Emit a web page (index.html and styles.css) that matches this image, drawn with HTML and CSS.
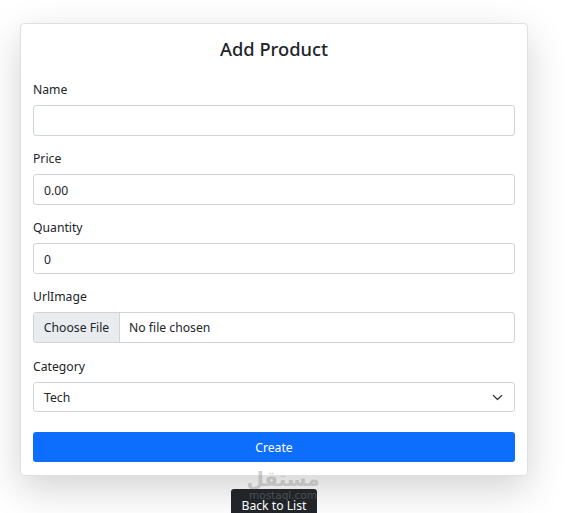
FILE: index.html
```html
<!DOCTYPE html>
<html lang="en">
<head>
    <meta charset="UTF-8">
    <meta name="viewport" content="width=device-width, initial-scale=1.0">
    <title>Add Product</title>
    <link rel="stylesheet" href="styles.css">
</head>
<body>
    <div class="page">
        <div class="card">
            <h2 class="title">Add Product</h2>
            <form class="form">
                <div class="group">
                    <label class="label">Name</label>
                    <input type="text" class="control">
                </div>
                <div class="group">
                    <label class="label">Price</label>
                    <input type="text" class="control" value="0.00">
                </div>
                <div class="group">
                    <label class="label">Quantity</label>
                    <input type="text" class="control" value="0">
                </div>
                <div class="group">
                    <label class="label">UrlImage</label>
                    <div class="control file">
                        <span class="file-btn">Choose File</span>
                        <span class="file-name">No file chosen</span>
                    </div>
                </div>
                <div class="group">
                    <label class="label">Category</label>
                    <div class="control select">
                        <span>Tech</span>
                        <svg class="chevron" viewBox="0 0 16 16" width="11" height="11">
                            <path d="M2 5l6 6 6-6" fill="none" stroke="#343a40" stroke-width="1.8" stroke-linecap="round" stroke-linejoin="round"/>
                        </svg>
                    </div>
                </div>
                <button type="button" class="create">Create</button>
            </form>
        </div>
        <a class="back">Back to List</a>
        <div class="mark">
            <div class="mark-ar">مستقل</div>
            <div class="mark-en">mostaql.com</div>
        </div>
    </div>
</body>
</html>
```

FILE: styles.css
```css
*{
    box-sizing: border-box;
    margin: 0;
    padding: 0;
}
html, body{
    height: 100%;
    overflow: hidden;
    background: #fff;
}
body{
    font-family: "Noto Sans", "Open Sans", sans-serif;
    font-size: 12.2px;
    color: #212529;
}
.page{
    position: relative;
    width: 569px;
    height: 513px;
    padding: 23px 0 0 20px;
}
.card{
    width: 508px;
    height: 453px;
    padding: 0 12px;
    background: #fff;
    border: 1px solid #dfe0e2;
    border-radius: 4px;
    box-shadow: 0 13px 38px rgba(0,0,0,.175);
}
.title{
    height: 57px;
    padding-top: 10px;
    font-size: 18.3px;
    font-weight: 500;
    line-height: 29px;
    text-align: center;
}
.group{
    margin-bottom: 14.15px;
}
.label{
    display: block;
    height: 24px;
    line-height: 18.6px;
}
.control{
    display: block;
    width: 100%;
    height: 31px;
    padding: 2px 10px 0;
    font: inherit;
    color: #212529;
    background: #fff;
    border: 1px solid #ced4da;
    border-radius: 3px;
}
.file{
    display: flex;
    align-items: center;
    padding: 0;
    overflow: hidden;
}
.file-btn{
    width: 86px;
    height: 100%;
    line-height: 29px;
    text-align: center;
    background: #e9ecef;
    border-right: 1px solid #ced4da;
}
.file-name{
    padding-left: 9px;
}
.select{
    display: flex;
    align-items: center;
    justify-content: space-between;
    height: 30px;
}
.chevron{
    margin-right: 1px;
}
.create{
    display: block;
    width: 100%;
    height: 30px;
    margin-top: 20px;
    padding-top: 2px;
    font: inherit;
    color: #fff;
    background: #0d6efd;
    border: 0;
    border-radius: 3px;
}
.back{
    position: absolute;
    left: 231px;
    top: 489px;
    width: 86px;
    height: 30px;
    padding-top: 8px;
    line-height: 18px;
    text-align: center;
    color: #fff;
    background: #212529;
    border-radius: 3px;
}
.mark{
    position: absolute;
    left: 245px;
    top: 467px;
    width: 76px;
    text-align: center;
    color: #8c8c8c;
    opacity: .4;
    pointer-events: none;
}
.mark-ar{
    height: 22px;
    font-family: "DejaVu Sans", sans-serif;
    font-size: 20px;
    font-weight: 700;
    line-height: 25px;
}
.mark-en{
    font-family: "DejaVu Sans", sans-serif;
    font-size: 10.5px;
    line-height: 12px;
}
```
